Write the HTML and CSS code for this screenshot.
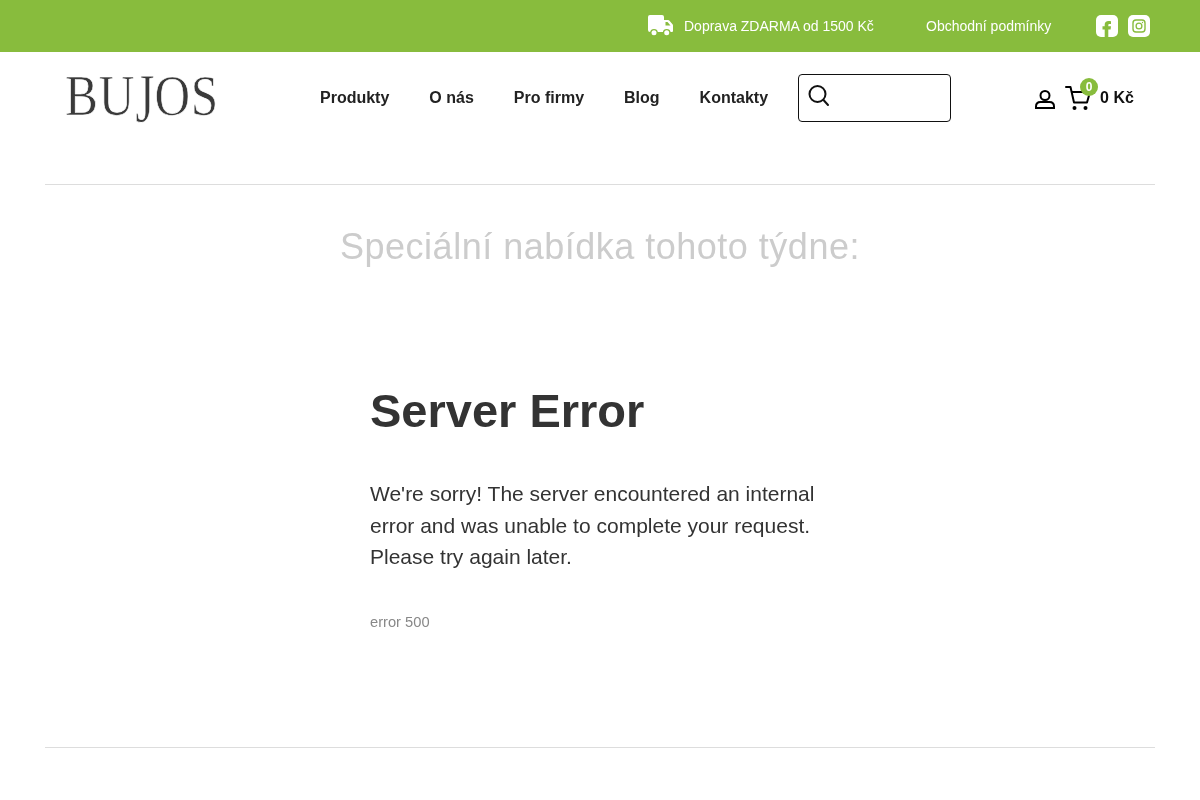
FILE: index.html
```html
<!DOCTYPE html>
<html lang="cs">
<head>
<meta charset="utf-8">
<title>Server Error</title>
<link rel="stylesheet" href="styles.css">
</head>
<body>
<div class="topbar">
  <div class="topbar-delivery">
    <svg class="truck" width="26" height="22" viewBox="0 0 26 22"><path d="M2 0h12a2 2 0 0 1 2 2v3h4a2 2 0 0 1 1.500.7l3 3.600a2 2 0 0 1 .5 1.300V16a1 1 0 0 1-1 1H2a2 2 0 0 1-2-2V2a2 2 0 0 1 2-2z" fill="#fff"/><path d="M17.500 7v3.500h5L19.500 7z" fill="#88bc3d"/><circle cx="6" cy="17.800" r="3.900" fill="#88bc3d"/><circle cx="18.700" cy="17.800" r="3.900" fill="#88bc3d"/><circle cx="6" cy="17.800" r="2.500" fill="#fff"/><circle cx="18.700" cy="17.800" r="2.500" fill="#fff"/></svg>
    <span>Doprava ZDARMA od 1500 Kč</span>
  </div>
  <a class="topbar-link">Obchodní podmínky</a>
  <div class="social">
    <svg width="22" height="22" viewBox="0 0 22 22"><rect width="22" height="22" rx="5" fill="#fff"/><path d="M8.700 22v-7.500H6.500v-3.200h2.200V9.700C8.700 7.300 10.200 6 12.500 6c1 0 2 .1 2.500.2v2.900h-1.400c-1 0-1.300.5-1.300 1.300v.9h2.700l-.4 3.200h-2.300V22z" fill="#88bc3d"/></svg>
    <svg width="22" height="22" viewBox="0 0 22 22"><rect width="22" height="22" rx="5" fill="#fff"/><rect x="5" y="5" width="12" height="12" rx="3" fill="none" stroke="#88bc3d" stroke-width="1.400"/><circle cx="11" cy="11" r="2.900" fill="none" stroke="#88bc3d" stroke-width="1.300"/><circle cx="14.500" cy="7.500" r=".7" fill="#88bc3d"/></svg>
  </div>
</div>
<header class="header">
  <a class="logo"><span>B</span><span>U</span><span class="logo-j">J</span><span>O</span><span>S</span></a>
  <nav class="nav">
    <a>Produkty</a>
    <a>O nás</a>
    <a>Pro firmy</a>
    <a>Blog</a>
    <a>Kontakty</a>
  </nav>
  <div class="search">
    <svg width="24" height="24" viewBox="0 0 24 24" fill="none" stroke="#111" stroke-width="2"><circle cx="10.500" cy="10" r="8"/><path d="M16.500 16l4.500 5" stroke-linecap="round"/></svg>
  </div>
  <div class="account">
    <svg width="22" height="22" viewBox="0 0 22 22" fill="none" stroke="#000" stroke-width="2"><circle cx="11" cy="8.500" r="4.500"/><path d="M2 21v-1.500c0-3 2-4.500 4.500-4.500h9c2.500 0 4.500 1.500 4.500 4.500V21z"/></svg>
    <div class="cart">
      <svg width="26" height="26" viewBox="0 0 26 26" fill="none" stroke="#000" stroke-width="2"><path d="M1 2h4.500l3.500 15.500h13L25 7H7" stroke-linejoin="round" stroke-linecap="round"/><circle cx="9.500" cy="23" r="2" fill="#000" stroke="none"/><circle cx="20.500" cy="23" r="2" fill="#000" stroke="none"/></svg>
      <span class="badge">0</span>
    </div>
    <span class="price">0 Kč</span>
  </div>
</header>
<main class="page">
  <hr class="rule">
  <h2 class="offer">Speciální nabídka tohoto týdne:</h2>
  <section class="error">
    <h1>Server Error</h1>
    <p>We're sorry! The server encountered an internal error and was unable to complete your request. Please try again later.</p>
    <small>error 500</small>
  </section>
  <hr class="rule">
</main>
</body>
</html>
```
FILE: styles.css
```css
* { box-sizing: border-box; }
html, body { margin: 0; padding: 0; }
body { font-family: "Liberation Sans", Arial, sans-serif; background: #fff; color: #333; overflow: hidden; }

.topbar { height: 52px; background: #88bc3d; color: #fff; display: flex; align-items: center; justify-content: flex-end; padding-right: 50px; font-size: 14px; }
.topbar-delivery { display: flex; align-items: center; gap: 10px; margin-right: 52px; will-change: transform; }
.truck { display: block; }
.topbar-link { margin-right: 45px; will-change: transform; }
.social { display: flex; gap: 10px; }
.social svg { display: block; }

.header { height: 132px; display: flex; align-items: flex-start; padding-left: 65px; will-change: transform; }
.logo { display: flex; width: 255px; height: 60px; margin-top: 14px; font-family: "Liberation Serif", serif; font-size: 58px; line-height: 60px; color: #3a3a3a; -webkit-text-stroke: .7px #fff; transform: scaleX(.85); transform-origin: left top; }
.logo span { display: block; margin-right: 1px; }
.logo .logo-j { margin: 0; transform: scaleY(1.22); transform-origin: center 16px; }
.nav { display: flex; gap: 40px; margin-top: 36px; font-size: 16px; font-weight: 700; line-height: 20px; color: #222; }
.search { width: 153px; height: 48px; margin: 22px 0 0 30px; border: 1px solid #111; border-radius: 4px; padding: 9px 0 0 8px; }
.search svg { display: block; }
.account { display: flex; align-items: center; margin: 33px 0 0 83px; }
.cart { position: relative; margin-left: 9px; height: 26px; }
.cart svg { display: block; }
.badge { position: absolute; left: 15px; top: -7px; width: 18px; height: 18px; border-radius: 50%; background: #88bc3d; color: #fff; font-size: 12px; font-weight: 700; line-height: 18px; text-align: center; }
.price { margin-left: 9px; font-size: 16px; font-weight: 700; color: #111; }

.page { margin: 0 45px; will-change: transform; }
.rule { border: 0; border-top: 1px solid #ddd; margin: 0; }
.offer { margin: 40px 0 0; font-size: 36px; line-height: 44px; font-weight: 400; text-align: center; color: #ccc; letter-spacing: .5px; }
.error { padding: 0 0 0 325px; height: 478px; }
.error h1 { margin: 0; padding-top: 112px; font-size: 47px; line-height: 60px; font-weight: 700; color: #333; }
.error p { margin: 37px 0 0; width: 470px; font-size: 21px; line-height: 31.5px; color: #333; }
.error small { display: block; margin-top: 38px; font-size: 14.7px; line-height: 22px; color: #888; }
```
